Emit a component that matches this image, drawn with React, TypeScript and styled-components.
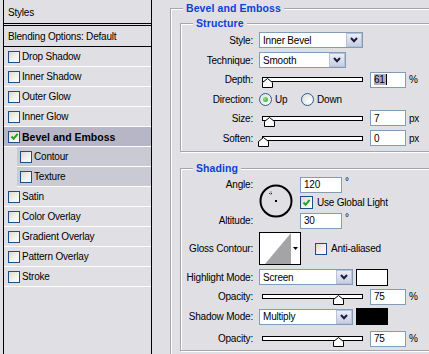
import styled, { createGlobalStyle } from "styled-components";

const panelBg = "#e0dfe3";
const titleBlue = "#0b3fd9";
const fieldBorder = "#7f9db9";
const groupLine = "#a5a5ad";

const GlobalStyle = createGlobalStyle`
  html, body {
    margin: 0;
    padding: 0;
    background: ${panelBg};
  }
  body {
    font-family: "Liberation Sans", Arial, sans-serif;
    font-size: 10px;
    letter-spacing: -0.2px;
    color: #000;
  }
  * {
    box-sizing: border-box;
  }
`;

const Dialog = styled.div`
  display: flex;
  width: 429px;
  height: 354px;
  overflow: hidden;
  background: ${panelBg};
`;

/* ---------- styles list (left) ---------- */

const StylesList = styled.div`
  flex: none;
  width: 149px;
  margin-left: 3px;
  border-left: 1px solid #000;
  border-right: 1px solid #000;
`;

const ListHeader = styled.div`
  height: 26px;
  padding: 2px 0 0 4px;
  display: flex;
  align-items: center;
  border-bottom: 3px double #000;
`;

const BlendingRow = styled.div`
  height: 21px;
  padding-left: 4px;
  display: flex;
  align-items: center;
  border-bottom: 1px solid #000;
`;

const EffectRow = styled.div<{ $selected?: boolean; $sub?: boolean }>`
  height: 20px;
  display: flex;
  align-items: center;
  gap: 2px;
  margin-left: ${(p) => (p.$sub ? 13 : 0)}px;
  padding-left: ${(p) => (p.$sub ? 3 : 4)}px;
  border-bottom: 1px solid #fff;
  background: ${(p) => (p.$selected ? "#b6b6c6" : p.$sub ? "#cacad4" : "transparent")};
  font-weight: ${(p) => (p.$selected ? 700 : 400)};
  font-size: ${(p) => (p.$selected ? "10.5px" : "10px")};
  letter-spacing: ${(p) => (p.$selected ? "0" : "-0.2px")};
`;

const CheckBox = styled.span<{ $size?: number }>`
  flex: none;
  width: ${(p) => p.$size ?? 12}px;
  height: ${(p) => p.$size ?? 12}px;
  border: 1px solid #1d4f86;
  background: linear-gradient(135deg, #d8d8d4 0%, #f2f2f0 55%, #fff 100%);
  display: inline-flex;
  align-items: center;
  justify-content: center;
`;

const Tick = () => (
  <svg width="9" height="9" viewBox="0 0 9 9">
    <path d="M1.5 4.5 L3.6 6.8 L7.6 1.8" fill="none" stroke="#21a121" strokeWidth="2" />
  </svg>
);

/* ---------- options (right) ---------- */

const RightPane = styled.div`
  flex: none;
  width: 277px;
  padding: 2px 0 0 18px;
  overflow: hidden;
`;

const GroupBox = styled.fieldset<{ $w: number; $top?: number; $left?: number; $h?: number }>`
  flex: none;
  width: ${(p) => p.$w}px;
  ${(p) => (p.$h ? `height: ${p.$h}px;` : "")}
  margin: ${(p) => p.$top ?? 0}px 0 0 ${(p) => p.$left ?? 0}px;
  padding: 0;
  min-width: 0;
  border: 1px solid ${groupLine};
  box-shadow: inset 1px 1px 0 #fff, 1px 1px 0 #fff;
`;

const GroupBody = styled.div<{ $pt?: number; $pb?: number }>`
  padding: ${(p) => p.$pt ?? 0}px 0 ${(p) => p.$pb ?? 0}px 0;
`;

const Legend = styled.legend`
  margin-left: 12px;
  padding: 0 3px;
  height: 13px;
  line-height: 13px;
  font-size: 10.5px;
  font-weight: 700;
  letter-spacing: 0.1px;
  color: ${titleBlue};
  background: ${panelBg};
`;

const FormRow = styled.div<{ $h: number }>`
  height: ${(p) => p.$h}px;
  display: grid;
  grid-template-columns: 72px auto;
  column-gap: 6px;
  align-items: center;
`;

const Label = styled.span`
  text-align: right;
  white-space: nowrap;
`;

const Controls = styled.div`
  display: flex;
  align-items: center;
`;

const Select = styled.div<{ $w: number }>`
  flex: none;
  width: ${(p) => p.$w}px;
  height: 16px;
  border: 1px solid ${fieldBorder};
  background: #fff;
  display: flex;
  align-items: center;
  justify-content: space-between;
  padding-left: 3px;
`;

const SelectButton = styled.span`
  width: 16px;
  height: 14px;
  display: flex;
  align-items: center;
  justify-content: center;
  background: linear-gradient(#eceef6, #c8cee2);
  border: 1px solid #fff;
  outline: 1px solid #b9c1d8;
  outline-offset: -1px;
`;

const Chevron = () => (
  <svg width="8" height="6" viewBox="0 0 8 6">
    <path d="M1 1 L4 4.2 L7 1" fill="none" stroke="#1a1a40" strokeWidth="2" />
  </svg>
);

const Field = styled.div<{ $w: number; $ml?: number }>`
  flex: none;
  width: ${(p) => p.$w}px;
  height: 16px;
  margin-left: ${(p) => p.$ml ?? 0}px;
  border: 1px solid ${fieldBorder};
  background: #fff;
  padding-left: 3px;
  display: flex;
  align-items: center;
`;

const Selection = styled.span`
  background: #aeaebe;
  padding-right: 1px;
`;

const Caret = styled.span`
  width: 1px;
  height: 11px;
  background: #000;
`;

const Unit = styled.span<{ $sup?: boolean }>`
  margin-left: 3px;
  align-self: ${(p) => (p.$sup ? "flex-start" : "center")};
  margin-top: ${(p) => (p.$sup ? "-1px" : "0")};
`;

const SliderTrack = styled.div`
  position: relative;
  flex: none;
  width: 101px;
  height: 5px;
  margin-left: 3px;
  border: 1px solid #000;
  background: #fff;
`;

const ThumbShape = styled.svg`
  position: absolute;
  top: 0;
`;

const Slider = ({ center }: { center: number }) => (
  <SliderTrack>
    <ThumbShape width="11" height="10" viewBox="0 0 11 10" style={{ left: center - 263 - 5 }}>
      <polygon points="5.5,0.5 10.5,4.5 10.5,9.5 0.5,9.5 0.5,4.5" fill="#fff" stroke="#000" />
    </ThumbShape>
  </SliderTrack>
);

const RadioOption = styled.span<{ $w?: number }>`
  display: inline-flex;
  align-items: center;
  gap: 3px;
  width: ${(p) => (p.$w ? `${p.$w}px` : "auto")};
`;

const Radio = styled.span<{ $on?: boolean }>`
  flex: none;
  width: 13px;
  height: 13px;
  border-radius: 50%;
  border: 1px solid #2d5d8e;
  background: radial-gradient(circle at 65% 65%, #fff, #d8d8d4);
  display: inline-flex;
  align-items: center;
  justify-content: center;

  &::after {
    content: "";
    width: 5px;
    height: 5px;
    border-radius: 50%;
    background: ${(p) => (p.$on ? "radial-gradient(circle at 35% 35%, #8ee88e, #16a016)" : "transparent")};
  }
`;

const AngleBlock = styled.div`
  display: grid;
  grid-template-columns: 72px 35px auto;
  grid-template-rows: 17px 18px 19px;
  column-gap: 6px;
  align-items: center;
`;

const DialCell = styled.div`
  grid-column: 2;
  grid-row: 1 / 4;
  align-self: start;
  margin-top: 8px;
`;

const CheckOption = styled.span<{ $ml?: number }>`
  display: inline-flex;
  align-items: center;
  gap: 4px;
  margin-left: ${(p) => p.$ml ?? 0}px;
`;

const ContourPicker = styled.div`
  flex: none;
  width: 42px;
  height: 33px;
  border: 1px solid #000;
  background: #fff;
  display: flex;
`;

const ContourArrow = styled.div`
  flex: 1;
  display: flex;
  align-items: center;
  justify-content: center;
`;

const Swatch = styled.div<{ $color: string }>`
  flex: none;
  width: 32px;
  height: 17px;
  margin-left: 3px;
  border: 1px solid #000;
  background: ${(p) => p.$color};
`;

const effects = [
  "Drop Shadow",
  "Inner Shadow",
  "Outer Glow",
  "Inner Glow",
];
const moreEffects = ["Satin", "Color Overlay", "Gradient Overlay", "Pattern Overlay", "Stroke"];

const App = () => {
  return (
    <>
      <GlobalStyle />
      <Dialog>
        <StylesList>
          <ListHeader>Styles</ListHeader>
          <BlendingRow>Blending Options: Default</BlendingRow>
          {effects.map((name) => (
            <EffectRow key={name}>
              <CheckBox />
              {name}
            </EffectRow>
          ))}
          <EffectRow $selected>
            <CheckBox>
              <Tick />
            </CheckBox>
            Bevel and Emboss
          </EffectRow>
          <EffectRow $sub>
            <CheckBox />
            Contour
          </EffectRow>
          <EffectRow $sub>
            <CheckBox />
            Texture
          </EffectRow>
          {moreEffects.map((name) => (
            <EffectRow key={name}>
              <CheckBox />
              {name}
            </EffectRow>
          ))}
        </StylesList>

        <RightPane>
          <GroupBox $w={330} $h={420}>
            <Legend>Bevel and Emboss</Legend>

            <GroupBox $w={300} $top={2} $left={9}>
              <Legend>Structure</Legend>
              <GroupBody $pb={2}>
                <FormRow $h={20}>
                  <Label>Style:</Label>
                  <Controls>
                    <Select $w={104}>
                      Inner Bevel
                      <SelectButton>
                        <Chevron />
                      </SelectButton>
                    </Select>
                  </Controls>
                </FormRow>
                <FormRow $h={20}>
                  <Label>Technique:</Label>
                  <Controls>
                    <Select $w={87}>
                      Smooth
                      <SelectButton>
                        <Chevron />
                      </SelectButton>
                    </Select>
                  </Controls>
                </FormRow>
                <FormRow $h={19}>
                  <Label>Depth:</Label>
                  <Controls>
                    <Slider center={267} />
                    <Field $w={36} $ml={7}>
                      <Selection>61</Selection>
                      <Caret />
                    </Field>
                    <Unit>%</Unit>
                  </Controls>
                </FormRow>
                <FormRow $h={20}>
                  <Label>Direction:</Label>
                  <Controls>
                    <RadioOption $w={42}>
                      <Radio $on />
                      Up
                    </RadioOption>
                    <RadioOption>
                      <Radio />
                      Down
                    </RadioOption>
                  </Controls>
                </FormRow>
                <FormRow $h={18}>
                  <Label>Size:</Label>
                  <Controls>
                    <Slider center={269} />
                    <Field $w={36} $ml={7}>7</Field>
                    <Unit>px</Unit>
                  </Controls>
                </FormRow>
                <FormRow $h={22}>
                  <Label>Soften:</Label>
                  <Controls>
                    <Slider center={263} />
                    <Field $w={36} $ml={7}>0</Field>
                    <Unit>px</Unit>
                  </Controls>
                </FormRow>
              </GroupBody>
            </GroupBox>

            <GroupBox $w={300} $top={10} $left={9}>
              <Legend>Shading</Legend>
              <GroupBody $pt={1}>
                <AngleBlock>
                  <Label>Angle:</Label>
                  <DialCell>
                    <svg width="34" height="34" viewBox="0 0 34 34">
                      <circle cx="17" cy="17" r="15.5" fill="none" stroke="#000" strokeWidth="2" />
                      <rect x="16" y="16" width="2" height="2" fill="#000" />
                      <path d="M12 7.5 V11.5 M10 9.5 H14" stroke="#333" strokeWidth="1" strokeDasharray="1 1" />
                    </svg>
                  </DialCell>
                  <Controls>
                    <Field $w={42}>120</Field>
                    <Unit $sup>°</Unit>
                  </Controls>
                  <Controls style={{ gridColumn: 3, gridRow: 2 }}>
                    <CheckOption>
                      <CheckBox $size={13}>
                        <Tick />
                      </CheckBox>
                      Use Global Light
                    </CheckOption>
                  </Controls>
                  <Label style={{ gridColumn: 1, gridRow: 3 }}>Altitude:</Label>
                  <Controls style={{ gridColumn: 3, gridRow: 3 }}>
                    <Field $w={42}>30</Field>
                    <Unit $sup>°</Unit>
                  </Controls>
                </AngleBlock>

                <FormRow $h={37}>
                  <Label>Gloss Contour:</Label>
                  <Controls>
                    <ContourPicker>
                      <svg width="31" height="31" viewBox="0 0 31 31">
                        <polygon points="5,31 31,0 31,31" fill="#a4a4a6" />
                      </svg>
                      <ContourArrow>
                        <svg width="5" height="3" viewBox="0 0 5 3">
                          <polygon points="0,0 5,0 2.5,3" fill="#000" />
                        </svg>
                      </ContourArrow>
                    </ContourPicker>
                    <CheckOption $ml={14}>
                      <CheckBox />
                      Anti-aliased
                    </CheckOption>
                  </Controls>
                </FormRow>

                <FormRow $h={20}>
                  <Label>Highlight Mode:</Label>
                  <Controls>
                    <Select $w={94}>
                      Screen
                      <SelectButton>
                        <Chevron />
                      </SelectButton>
                    </Select>
                    <Swatch $color="#fff" />
                  </Controls>
                </FormRow>
                <FormRow $h={19}>
                  <Label>Opacity:</Label>
                  <Controls>
                    <Slider center={338} />
                    <Field $w={36} $ml={7}>75</Field>
                    <Unit>%</Unit>
                  </Controls>
                </FormRow>
                <FormRow $h={21}>
                  <Label>Shadow Mode:</Label>
                  <Controls>
                    <Select $w={94}>
                      Multiply
                      <SelectButton>
                        <Chevron />
                      </SelectButton>
                    </Select>
                    <Swatch $color="#000" />
                  </Controls>
                </FormRow>
                <FormRow $h={23}>
                  <Label>Opacity:</Label>
                  <Controls>
                    <Slider center={338} />
                    <Field $w={36} $ml={7}>75</Field>
                    <Unit>%</Unit>
                  </Controls>
                </FormRow>
              </GroupBody>
            </GroupBox>
          </GroupBox>
        </RightPane>
      </Dialog>
    </>
  );
};

export default App;
